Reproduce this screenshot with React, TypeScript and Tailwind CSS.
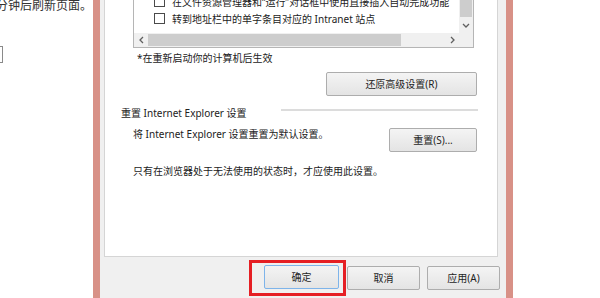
import type { ReactNode } from "react";

function WinButton({ children, className = "" }: { children: ReactNode; className?: string }) {
  return (
    <button
      className={`h-[24px] flex items-center justify-center rounded-[2px] border bg-linear-to-b from-[#f4f4f4] to-[#e4e4e4] text-[10px] text-[#1e1e1e] ${className}`}
    >
      {children}
    </button>
  );
}

function Chevron({ dir }: { dir: "left" | "right" | "down" }) {
  const d = dir === "left" ? "M4 1 L1 4 L4 7" : dir === "right" ? "M1 1 L4 4 L1 7" : "M1 1 L4 4 L7 1";
  const w = dir === "down" ? 8 : 5;
  const h = dir === "down" ? 5 : 8;
  return (
    <svg width={w} height={h} viewBox={`0 0 ${w} ${h}`}>
      <path d={d} fill="none" stroke="#606060" strokeWidth="1.3" />
    </svg>
  );
}

function CheckRow({ label }: { label: string }) {
  return (
    <div className="h-[17px] flex items-center gap-[7px] whitespace-nowrap">
      <span className="w-[11px] h-[11px] shrink-0 border border-[#4a4a4a] bg-white" />
      <span>{label}</span>
    </div>
  );
}

export default function App() {
  return (
    <div className="w-[600px] h-[298px] flex overflow-hidden bg-white text-[10px] leading-[14px] text-[#222] font-['Noto_Sans','Noto_Sans_CJK_SC',sans-serif]">
      {/* page behind the dialog */}
      <div className="w-[93px] shrink-0 flex flex-col">
        <p className="-ml-[4px] -mt-[3px] text-[12px] leading-[16px] whitespace-nowrap text-[#333] font-['Noto_Sans_CJK_SC',sans-serif]">
          分钟后刷新页面。
        </p>
        <div className="mt-[33px] w-[3px] h-[17px] border-y border-r border-[#8a8a8a]" />
      </div>

      <div className="w-[7px] shrink-0 bg-[#d89187]" />

      {/* dialog */}
      <div className="w-[406px] shrink-0 bg-[#f0f0f0] flex flex-col">
        <div className="ml-[4px] w-[394px] h-[257px] border-x border-b border-[#d5d5d5] bg-white flex flex-col">
          {/* settings list */}
          <div className="ml-[28px] w-[341px] border-x border-b border-[#b5b5b5] flex flex-col">
            <div className="h-[33px] flex">
              <div className="flex-1 overflow-hidden">
                <div className="-mt-[7px] pl-[20px]">
                  <CheckRow label="在文件资源管理器和“运行”对话框中使用直接插入自动完成功能" />
                  <CheckRow label="转到地址栏中的单字条目对应的 Intranet 站点" />
                </div>
              </div>
              <div className="w-[14px] bg-[#f0f0f0] flex flex-col">
                <div className="h-[17px] mx-[1px] bg-[#cdcdcd]" />
                <div className="flex-1 flex items-end justify-center pb-[5px]">
                  <Chevron dir="down" />
                </div>
              </div>
            </div>
            <div className="h-[14px] flex bg-[#f0f0f0]">
              <div className="w-[14px] flex items-center justify-center">
                <Chevron dir="left" />
              </div>
              <div className="w-[253px] my-[1px] bg-[#cdcdcd]" />
              <div className="flex-1" />
              <div className="w-[14px] flex items-center justify-center">
                <Chevron dir="right" />
              </div>
              <div className="w-[14px]" />
            </div>
          </div>

          <p className="ml-[32px] mt-[3px]">*在重新启动你的计算机后生效</p>

          <WinButton className="self-end mr-[20px] mt-[7px] w-[151px] h-[23px] border-[#adadad]">
            还原高级设置(R)
          </WinButton>

          {/* reset group */}
          <div className="mt-[10px] h-[14px] flex">
            <span className="ml-[16px] whitespace-nowrap">重置 Internet Explorer 设置</span>
            <div className="self-start mt-[3px] ml-auto mr-[19px] w-[197px] h-[2px] bg-[#dcdcdc]" />
          </div>

          <div className="mt-[7px] flex items-start">
            <p className="ml-[28px] whitespace-nowrap">将 Internet Explorer 设置重置为默认设置。</p>
            <WinButton className="ml-auto mr-[20px] mt-[1px] w-[88px] border-[#adadad]">重置(S)...</WinButton>
          </div>

          <p className="ml-[28px] mt-[12px] whitespace-nowrap">只有在浏览器处于无法使用的状态时，才应使用此设置。</p>
        </div>

        {/* dialog buttons */}
        <div className="mt-[3px] flex justify-end items-start pr-[6px]">
          <div className="border-[3px] border-[#e51f24] pl-[12px] pr-[4px] pt-[2px] pb-[4px]">
            <WinButton className="w-[75px] border-[#7eb4ea]">确定</WinButton>
          </div>
          <WinButton className="ml-[1px] mt-[6px] w-[73px] border-[#adadad]">取消</WinButton>
          <WinButton className="ml-[7px] mt-[6px] w-[73px] border-[#adadad]">应用(A)</WinButton>
        </div>
      </div>

      <div className="w-[7px] shrink-0 bg-[#d89187]" />
      <div className="flex-1 bg-white" />
    </div>
  );
}
